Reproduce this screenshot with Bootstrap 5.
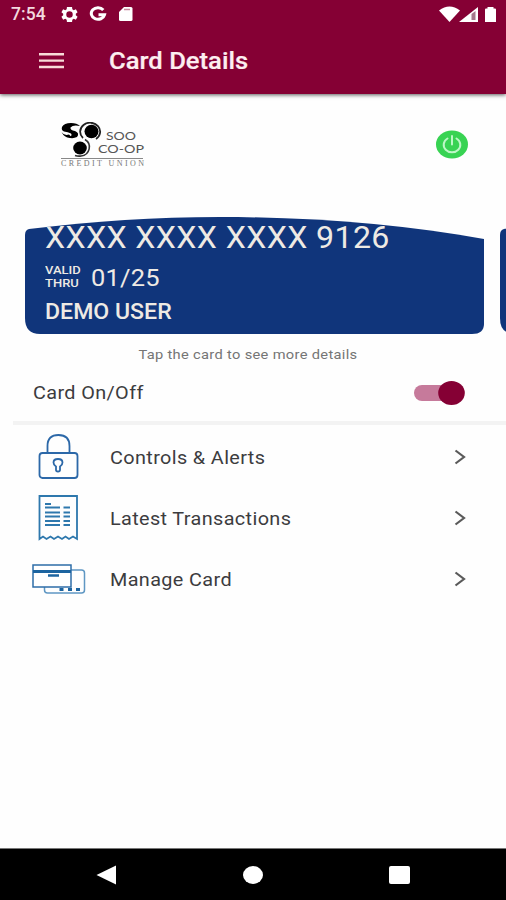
<!DOCTYPE html>
<html lang="en">
<head>
<meta charset="utf-8">
<meta name="viewport" content="width=device-width, initial-scale=1">
<title>Card Details</title>
<link href="https://cdn.jsdelivr.net/npm/bootstrap@5.3.0/dist/css/bootstrap.min.css" rel="stylesheet">
<style>
  body { font-family: Roboto, "Liberation Sans", sans-serif; color: #3c3c3e; height: 900px; overflow: hidden; background: #fefefe; }
  svg { display: block; flex: none; }
  .app-head { background: #850034; height: 94px; box-shadow: 0 1px 4px rgba(0,0,0,.65); color: #fdeef0; z-index: 1; }
  .status { height: 28px; padding: 0 9px 0 11px; }
  .clock { font-size: 17.5px; font-weight: 500; line-height: 28px; width: 50px; letter-spacing: .1px; color: #f3d9df; }
  .title-row { height: 66px; padding-left: 39px; }
  .title { font-size: 23.5px; font-weight: 500; line-height: 66px; margin-left: 45px; margin-top: -1px; transform: scaleX(1.09); transform-origin: 0 50%; -webkit-text-stroke: .2px; }
  .brand-row { height: 123px; padding: 28px 38px 0 60px; }
  .cards { height: 117px; padding-left: 25px; gap: 16px; overflow: hidden; }
  .pay-card { width: 459px; flex: none; background: #10357b; color: #eeeae4; padding: 0 20px; clip-path: path("M0 18Q0 13 4 12C70 4 130 0 195 0C290 0 380 8 459 22V107Q459 117 447 117H15Q0 117 0 101Z"); }
  .number { font-size: 30.5px; line-height: 36px; margin-top: 3px; letter-spacing: .35px; transform: scaleX(1.053); transform-origin: 0 50%; }
  .valid-row { margin-top: 6px; }
  .valid { font-size: 11.5px; line-height: 13px; font-weight: 500; width: 41px; margin-right: 5px; transform: scaleX(1.13); transform-origin: 0 50%; }
  .expiry { font-size: 24px; line-height: 28px; letter-spacing: .2px; transform: scaleX(1.06); transform-origin: 0 50%; margin-top: 2px; }
  .holder { font-size: 22px; line-height: 26px; font-weight: 500; transform: scaleX(1.05); transform-origin: 0 50%; margin-top: 7px; }
  .hint { font-size: 13.5px; line-height: 20px; letter-spacing: .3px; color: #757575; margin-top: 10px; padding-right: 11px; }
  .hint span { display: inline-block; transform: scaleX(1.085); }
  .entry { font-size: 18.5px; letter-spacing: .35px; line-height: 24px; transform: scaleX(1.072); transform-origin: 0 50%; }
  .toggle-row { height: 56px; padding: 0 41px 0 33px; margin-top: 1px; }
  .rule { height: 4px; background: #f3f3f3; margin-left: 13px; }
  .menu-row { height: 61px; padding: 3px 40px 0 32px; }
  .menu-icon { width: 78px; }
  .menu-row .menu-icon { margin-top: -2px; }
  .menu-row .entry { margin-top: 2px; }
  .menu-row.cards-row .menu-icon { margin-top: 0; }
  .nav-foot { height: 52px; background: #000; padding: 0 96px; border-top: 1px solid #777; }
</style>
</head>
<body class="d-flex flex-column">
<header class="app-head position-relative flex-shrink-0">
  <div class="status d-flex align-items-center">
    <span class="clock">7:54</span>
    <svg width="17" height="17" viewBox="2 2 20 20" fill="#fff"><path d="M19.400 13a7.500 7.500 0 0 0 0-2l2.100-1.600-2-3.500-2.500 1a7.300 7.300 0 0 0-1.700-1L15 3.200H9l-.3 2.700a7.300 7.300 0 0 0-1.700 1l-2.500-1-2 3.500L4.600 11a7.500 7.500 0 0 0 0 2l-2.100 1.600 2 3.500 2.500-1a7.300 7.300 0 0 0 1.700 1L9 20.800h6l.3-2.700a7.300 7.300 0 0 0 1.700-1l2.500 1 2-3.500zM12 8.200a3.800 3.800 0 1 1 0 7.600 3.800 3.800 0 0 1 0-7.600z" fill-rule="evenodd"/></svg>
    <svg class="ms-2" width="24" height="16" viewBox="0 0 24 16" fill="none" stroke="#fff" stroke-width="3"><path d="M17.300 4A6.700 5.800 0 1 0 18.500 8.800H12.500"/></svg>
    <svg class="ms-2" width="16" height="16" viewBox="0 0 16 16"><path d="M6 1h7q1.500 0 1.500 1.500v11Q14.500 15 13 15H2.500Q1 15 1 13.500V6z" fill="#fff"/><path d="M6 3.500h6" stroke="#c98aa0" stroke-width="1.500"/></svg>
    <svg class="ms-auto" width="58" height="18" viewBox="0 0 58 18"><path d="M0 5.500Q10.500-2.500 21 5.500L10.500 17z" fill="#fff"/><path d="M39 2v15H20z" fill="#fff"/><path d="M32.500 9l4-3v9h-4z" fill="#a5778b"/><path d="M46 17V4.500q0-1 1-1h1.500V2h6v1.500H56q1 0 1 1V17z" fill="#fff"/></svg>
  </div>
  <div class="title-row d-flex align-items-center">
    <svg width="25" height="16" viewBox="0 0 25 16" fill="#f8dcd8"><path d="M0 0h25v2.400H0zM0 6.400h25v2.400H0zM0 12.800h25v2.400H0z"/></svg>
    <span class="title">Card Details</span>
  </div>
</header>

<main class="flex-grow-1">
  <div class="brand-row d-flex justify-content-between">
    <svg width="86" height="46" viewBox="0 0 86 46" role="img" aria-label="Soo Co-op Credit Union">
      <path d="M2 5Q4 1 11 1Q17 1 20 4Q13 2.500 10.500 5.500Q10 8 15 9Q20 11 17 15Q13 17 8 15.500Q13 14 11 11.500Q8 10 4 9.500Q1 8 2 5z" fill="#000"/>
      <path d="M1.500 10Q4 14 9 12.500L12 15.500Q5 17 1.500 10z" fill="#000"/>
      <ellipse cx="31.500" cy="9.500" rx="7" ry="6.800" fill="#000"/>
      <path d="M23 16A10 9 0 1 1 36 17" fill="none" stroke="#222" stroke-width="1.800"/>
      <ellipse cx="20" cy="26" rx="6.800" ry="6.500" fill="#000"/>
      <path d="M25 17.500A9.500 9 0 0 1 21 34Q18 34.500 15 33.500" fill="none" stroke="#333" stroke-width="1.600"/>
      <g font-family="Lato, sans-serif" fill="#555">
        <text x="46" y="18" font-size="11.500" textLength="30" lengthAdjust="spacingAndGlyphs">SOO</text>
        <text x="38" y="30.500" font-size="11.500" textLength="46" lengthAdjust="spacingAndGlyphs">CO-OP</text>
        <text x="1" y="43.500" font-family="Liberation Serif, serif" font-size="8" textLength="83" fill="#777">CREDIT UNION</text>
      </g>
      <path d="M1 36.500H83" stroke="#888"/>
    </svg>
    <svg class="mt-2" width="32" height="29" viewBox="0 0 32 29"><ellipse cx="16" cy="14.500" rx="16" ry="14" fill="#38d353"/><path d="M11.500 8.500A8.300 7.500 0 1 0 20.500 8.500M16 6v8.500" fill="none" stroke="#bdf7c6" stroke-width="2" stroke-linecap="round"/></svg>
  </div>

  <div class="cards d-flex">
    <section class="pay-card">
      <div class="number text-nowrap">XXXX XXXX XXXX 9126</div>
      <div class="valid-row d-flex align-items-center">
        <span class="valid">VALID<br>THRU</span><span class="expiry">01/25</span>
      </div>
      <div class="holder">DEMO USER</div>
    </section>
    <section class="pay-card"></section>
  </div>
  <p class="hint text-center mb-0"><span>Tap the card to see more details</span></p>

  <div class="toggle-row d-flex align-items-center justify-content-between">
    <span class="entry">Card On/Off</span>
    <svg width="51" height="24" viewBox="0 0 51 24"><rect y="4" width="44" height="16" rx="8" fill="#c67a9b"/><ellipse cx="37.500" cy="12" rx="13.300" ry="12" fill="#850034"/></svg>
  </div>
  <div class="rule"></div>

  <nav>
    <div class="menu-row d-flex align-items-center">
      <div class="menu-icon ps-1">
        <svg width="44" height="48" viewBox="0 0 44 48" fill="none" stroke="#2c68a8" stroke-width="1.800"><rect x="3.500" y="21" width="38" height="25" rx="3"/><path d="M11.500 21V14Q11.500 3 22.500 3T33.500 14V21"/><path d="M20 34.500Q17.500 33 17.500 30.500Q17.500 27 22 27T26.500 30.500Q26.500 33 24 34.500V38Q24 39.500 22 39.500T20 38z"/></svg>
      </div>
      <span class="entry">Controls &amp; Alerts</span>
      <svg class="ms-auto" width="12" height="16" viewBox="0 0 12 16" fill="none" stroke="#5a5a5a" stroke-width="2.200"><path d="M1.500 1.500L10 8L1.500 14.500"/></svg>
    </div>
    <div class="menu-row d-flex align-items-center">
      <div class="menu-icon ps-1">
        <svg width="44" height="48" viewBox="0 0 44 48" fill="none" stroke="#2e78ad" stroke-width="1.800"><path d="M3.500 46V3H41V46L37 43.500L33 46L29.500 43.500L26 46L22 43.500L18 46L14.500 43.500L10.500 46L7 43.500z"/><path d="M9 11H15M9 14.500H24M27.500 14.500H34M9 19.500H24M27.500 19.500H34M9 23.500H24M27.500 23.500H34M9 28H24M27.500 28H34M9 32H24M27.500 32H34"/></svg>
      </div>
      <span class="entry">Latest Transactions</span>
      <svg class="ms-auto" width="12" height="16" viewBox="0 0 12 16" fill="none" stroke="#5a5a5a" stroke-width="2.200"><path d="M1.500 1.500L10 8L1.500 14.500"/></svg>
    </div>
    <div class="menu-row cards-row d-flex align-items-center">
      <div class="menu-icon">
        <svg width="54" height="32" viewBox="0 0 54 32" fill="none" stroke="#5f97c3" stroke-width="1.500"><rect x="12.500" y="7" width="40" height="23" rx="3"/><rect x="1" y="2" width="38" height="22" fill="#fff" stroke="#2e6da8"/><path d="M1 8.500H39" stroke="#1c64a0" stroke-width="3"/><path d="M16 12.500H27" stroke="#1c64a0" stroke-width="2.500"/><path d="M27.500 26.500h4M36 26.500h4M44 26.500h4" stroke="#1c64a0" stroke-width="3"/></svg>
      </div>
      <span class="entry">Manage Card</span>
      <svg class="ms-auto" width="12" height="16" viewBox="0 0 12 16" fill="none" stroke="#5a5a5a" stroke-width="2.200"><path d="M1.500 1.500L10 8L1.500 14.500"/></svg>
    </div>
  </nav>
</main>

<footer class="nav-foot d-flex align-items-center justify-content-between flex-shrink-0">
  <svg width="21" height="20" viewBox="0 0 21 20"><path d="M.5 10L20 .5V19.500z" fill="#fff"/></svg>
  <svg width="20" height="18" viewBox="0 0 20 18"><ellipse cx="10" cy="9" rx="10" ry="9" fill="#fff"/></svg>
  <svg width="21" height="18" viewBox="0 0 21 18"><rect width="21" height="18" rx="2" fill="#fff"/></svg>
</footer>
<script src="https://cdn.jsdelivr.net/npm/bootstrap@5.3.0/dist/js/bootstrap.bundle.min.js"></script>
</body>
</html>
